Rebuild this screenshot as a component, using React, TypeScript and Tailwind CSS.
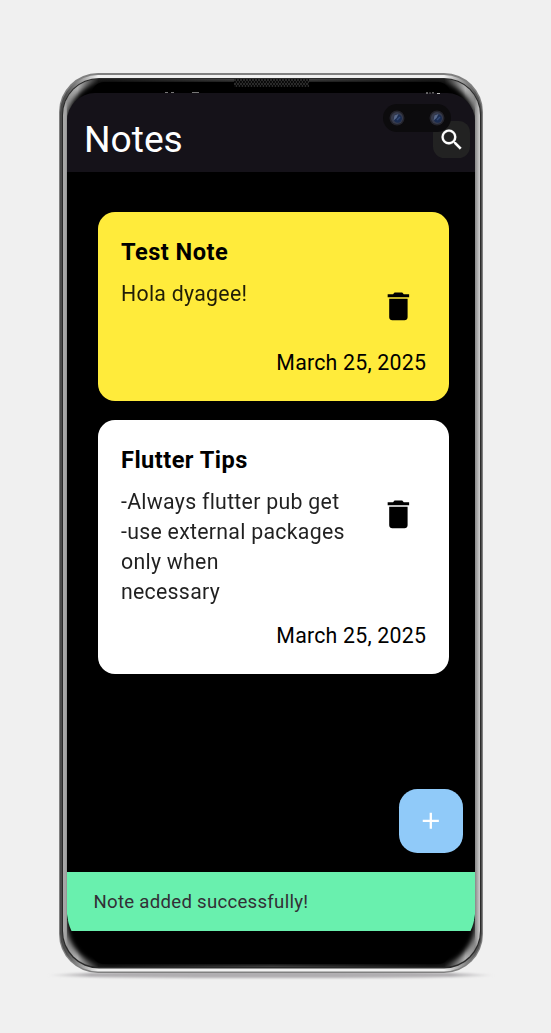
import React from "react";

type Note = { title: string; body: string; date: string; tone: string };

const notes: Note[] = [
  { title: "Test Note", body: "Hola dyagee!", date: "March 25, 2025", tone: "bg-[#ffeb3b] h-[189px]" },
  {
    title: "Flutter Tips",
    body: "-Always flutter pub get\n-use external packages\nonly when\nnecessary",
    date: "March 25, 2025",
    tone: "bg-white h-[254px]",
  },
];

function Icon({ d, className }: { d: string; className: string }) {
  return (
    <svg viewBox="0 0 24 24" className={className} fill="currentColor" aria-hidden="true">
      <path d={d} />
    </svg>
  );
}

const SEARCH =
  "M15.5 14h-.79l-.28-.27A6.47 6.47 0 0 0 16 9.5 6.5 6.5 0 1 0 9.5 16c1.61 0 3.09-.59 4.23-1.57l.27.28v.79l5 4.99L20.49 19l-4.99-5zm-6 0C7.01 14 5 11.99 5 9.5S7.01 5 9.5 5 14 7.01 14 9.5 11.99 14 9.5 14z";
const TRASH = "M6 19c0 1.1.9 2 2 2h8c1.1 0 2-.9 2-2V7H6v12zM19 4h-3.5l-1-1h-5l-1 1H5v2h14V4z";
const PLUS = "M19 13h-6v6h-2v-6H5v-2h6V5h2v6h6v2z";

function Chassis() {
  return (
    <svg viewBox="0 0 551 1033" className="absolute inset-0 h-[1033px] w-[551px]" aria-hidden="true">
      <defs>
        <linearGradient id="rim" gradientUnits="userSpaceOnUse" x1="60" y1="0" x2="482" y2="0">
          <stop offset="0" stopColor="#484848" />
          <stop offset=".015" stopColor="#505050" />
          <stop offset=".09" stopColor="#f0f0f0" />
          <stop offset=".91" stopColor="#f0f0f0" />
          <stop offset=".985" stopColor="#585858" />
          <stop offset="1" stopColor="#505050" />
        </linearGradient>
        <linearGradient id="band" gradientUnits="userSpaceOnUse" x1="63" y1="0" x2="480" y2="0">
          <stop offset="0" stopColor="#a8a8a8" />
          <stop offset=".006" stopColor="#a4a4a4" />
          <stop offset=".01" stopColor="#909090" />
          <stop offset=".035" stopColor="#b4b4b4" />
          <stop offset=".085" stopColor="#222" />
          <stop offset=".5" stopColor="#686868" />
          <stop offset=".915" stopColor="#222" />
          <stop offset=".965" stopColor="#b4b4b4" />
          <stop offset=".988" stopColor="#888" />
          <stop offset=".996" stopColor="#b8b8b8" />
          <stop offset="1" stopColor="#ccc" />
        </linearGradient>
        <linearGradient id="ground" x1="0" x2="1" y1="0" y2="0">
          <stop offset="0" stopColor="#b4b2b5" stopOpacity="0" />
          <stop offset=".1" stopColor="#b0aeb1" />
          <stop offset=".9" stopColor="#b0aeb1" />
          <stop offset="1" stopColor="#b4b2b5" stopOpacity="0" />
        </linearGradient>
        <filter id="soft" x="-5%" y="-5%" width="110%" height="110%">
          <feGaussianBlur stdDeviation="2.8" />
        </filter>
        <filter id="softGround" x="-5%" y="-50%" width="110%" height="200%">
          <feGaussianBlur stdDeviation=".8" />
        </filter>
        <clipPath id="inner">
          <rect x="63" y="79" width="417" height="888" rx="36" />
        </clipPath>
        <clipPath id="glass">
          <rect x="67" y="79" width="408" height="888" rx="30" />
        </clipPath>
        <pattern id="grille" x="234" y="79" width="3" height="4" patternUnits="userSpaceOnUse">
          <circle cx="1" cy="1" r=".8" fill="#555" />
          <circle cx="2.5" cy="3" r=".8" fill="#3a3a3a" />
        </pattern>
      </defs>
      <path d="M46 975.500 Q80 971 271 971 Q462 971 496 975.500 Q462 978 271 978 Q80 978 46 975.500Z" fill="url(#ground)" filter="url(#softGround)" />
      <rect x="59" y="73" width="424" height="900" rx="39" fill="#808080" />
      <rect x="60" y="75" width="422" height="896.5" rx="38" fill="url(#rim)" />
      <rect x="62" y="78" width="419" height="890.5" rx="37" fill="#2a2a2a" />
      <rect x="63" y="79" width="417" height="888" rx="36" fill="url(#band)" />
      <g clipPath="url(#inner)">
        <g clipPath="url(#glass)">
          <rect x="66.5" y="81" width="409" height="885" rx="42" fill="#000" filter="url(#soft)" />
        </g>
        <rect x="67" y="120" width="408" height="800" fill="#000" />
        <rect x="92" y="82" width="358" height="882" rx="12" fill="#000" />
      </g>
      <rect x="234" y="79" width="75" height="8" fill="#080808" />
      <rect x="234" y="79" width="75" height="8" fill="url(#grille)" />
    </svg>
  );
}

function Lens() {
  return (
    <svg viewBox="0 0 16 16" className="size-4" aria-hidden="true">
      <circle cx="8" cy="8" r="7.500" fill="#24242c" />
      <circle cx="8" cy="8" r="6" fill="#373b4c" />
      <circle cx="8.800" cy="8.500" r="4.200" fill="#1b2c50" />
      <path d="M4.500 10.500 5.500 5.500l4-1.500-2 4z" fill="#596888" />
      <path d="m8 10 3-3" stroke="#324a78" strokeWidth="1.500" />
    </svg>
  );
}

function NoteCard({ note }: { note: Note }) {
  return (
    <article className={`flex w-[351.5px] flex-col rounded-[17px] px-[23px] pt-[26px] text-black ${note.tone}`}>
      <h2 className="pl-[0.4px] text-[23.6px] leading-[29px] font-bold tracking-[0.46px]">{note.title}</h2>
      <div className="mt-[12px] flex flex-1 items-start justify-between">
        <p className="whitespace-pre pl-[0.4px] text-[21.3px] leading-[30px] tracking-[0.28px] opacity-[.87]">{note.body}</p>
        <Icon d={TRASH} className="mt-[9.1px] mr-[9.1px] size-[36.800px] shrink-0" />
      </div>
      <time className="mb-[23px] self-end text-[21.3px] leading-[30px] tracking-[0.22px]">{note.date}</time>
    </article>
  );
}

export default function App() {
  return (
    <main className="relative h-[1033px] w-[551px] overflow-hidden bg-[#f0f0f0] pt-[93px] pl-[67px] font-['Roboto',sans-serif]">
      <Chassis />
      <div className="relative flex h-[838px] w-[408px] flex-col">
        <header className="relative flex h-[79px] items-center justify-between rounded-t-[28px] bg-[#151219] pr-[5px] pl-[17px]">
          <h1 className="pt-[13px] text-[37.2px] leading-[44px] text-white">Notes</h1>
          <button aria-label="Search" className="mt-[14px] flex size-[37px] items-center justify-center rounded-[11.5px] bg-[#222222] text-white">
            <Icon d={SEARCH} className="size-[27.600px] stroke-current stroke-[0.15]" />
          </button>
          <div className="absolute top-[11px] left-[315.5px] flex h-[28px] w-[68.5px] items-center justify-between rounded-full bg-[#0c0b0d] px-[6.500px]">
            <Lens />
            <Lens />
          </div>
          <svg viewBox="0 0 280 3" className="absolute top-[-1px] left-[96px] h-[3px] w-[280px]" aria-hidden="true">
            <path d="M2 .5h3M8 .5h3M29 .5h7" stroke="#777" />
            <path d="M264 0v2M267 .5v1M270 0v1.500M274 1.500h3" stroke="#bbb" />
          </svg>
        </header>
        <section className="flex flex-1 flex-col gap-[19px] pt-[40px] pl-[30.6px]">
          {notes.map((note) => (
            <NoteCard key={note.title} note={note} />
          ))}
        </section>
        <button
          aria-label="Add note"
          className="mr-[12px] mb-[19px] flex size-[64.500px] items-center justify-center self-end rounded-[18.400px] bg-[#90caf9] text-white"
        >
          <Icon d={PLUS} className="size-[27.600px]" />
        </button>
        <div className="flex h-[59px] items-center bg-[#69f0ae] pt-[2px] pl-[26.5px] text-[18.6px] tracking-[0.28px] text-[#322f35] [clip-path:path('M0_0H408V42Q407_52_403.5_59H4.5Q1_52_0_42Z')]">
          Note added successfully!
        </div>
      </div>
    </main>
  );
}
